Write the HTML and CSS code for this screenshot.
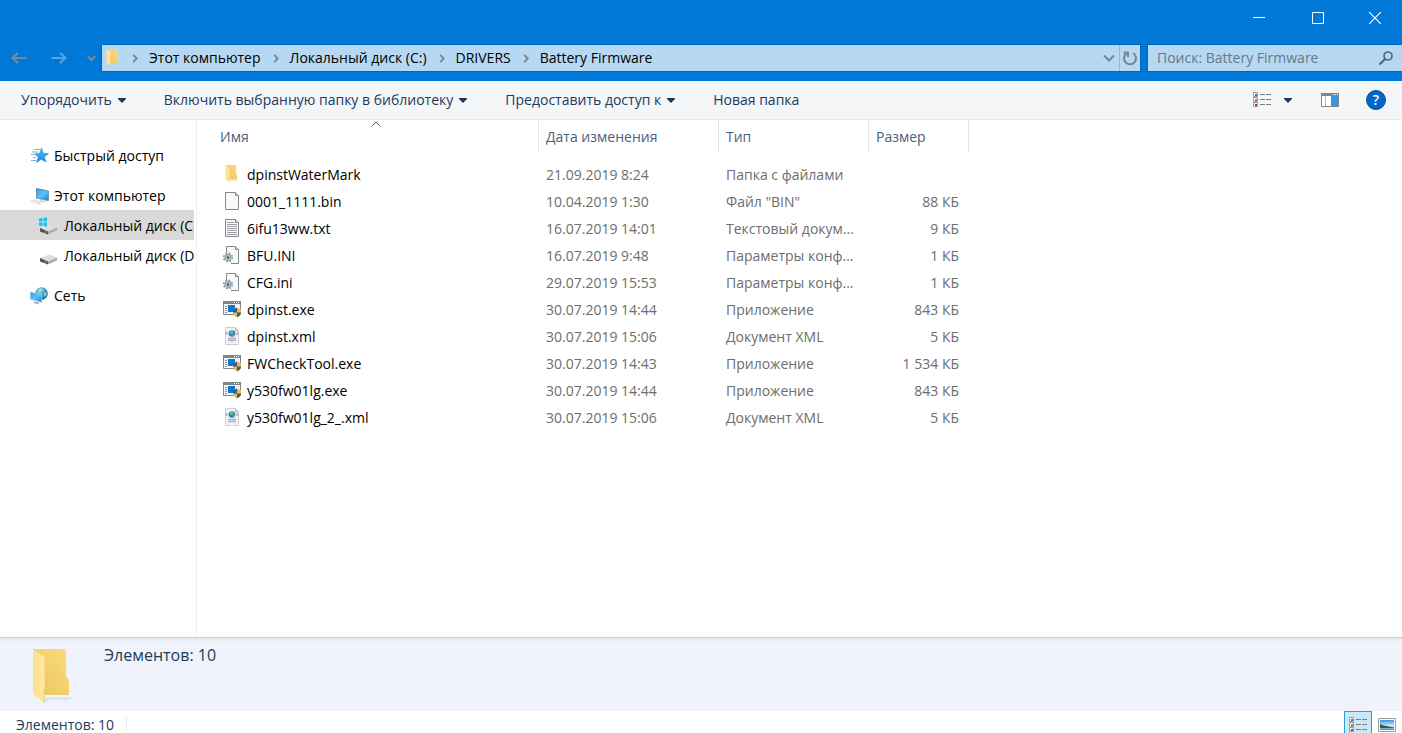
FILE: index.html
```html
<!DOCTYPE html>
<html lang="ru">
<head>
<meta charset="utf-8">
<meta name="viewport" content="width=device-width, initial-scale=1">
<title>Battery Firmware</title>
<link rel="stylesheet" href="styles.css">
</head>
<body>
<svg class="sprite" aria-hidden="true">
  <defs>
    <linearGradient id="g-front" x1="0" y1="0" x2="1" y2="0"><stop offset="0" stop-color="#ffe08a"/><stop offset="1" stop-color="#ffe9a6"/></linearGradient>
    <linearGradient id="g-back" x1="0" y1="1" x2="1" y2="0"><stop offset="0" stop-color="#eac45f"/><stop offset="1" stop-color="#fbdc7d"/></linearGradient>
    <linearGradient id="g-screen" x1="0" y1="0" x2="1" y2="1"><stop offset="0" stop-color="#2f9fe8"/><stop offset=".5" stop-color="#5cc0fa"/><stop offset="1" stop-color="#1c86d8"/></linearGradient>
    <linearGradient id="g-star" x1="0" y1="0" x2="0" y2="1"><stop offset="0" stop-color="#49c3f7"/><stop offset="1" stop-color="#1c84e0"/></linearGradient>
    <linearGradient id="g-pic" x1="0" y1="0" x2="0" y2="1"><stop offset="0" stop-color="#3f8fd8"/><stop offset=".6" stop-color="#d8eefa"/><stop offset="1" stop-color="#4c86b8"/></linearGradient>
    <radialGradient id="g-globe" cx=".35" cy=".3" r=".8"><stop offset="0" stop-color="#8fd0e6"/><stop offset=".6" stop-color="#3c94bd"/><stop offset="1" stop-color="#1d5e8c"/></radialGradient>
  </defs>
  <symbol id="folder" viewBox="0 0 40 56">
    <path d="M10 48h30l-4 3H10zM11 54l5-3h-5z" fill="#c9ccd6" opacity=".4"/>
    <path d="M0 0h33v27l3 4v15H8z" fill="url(#g-back)"/>
    <path d="M0 0l12 9v30l-1 1v14L0 45z" fill="url(#g-front)"/>
    <path d="M12 9v30l-1 1v14" fill="none" stroke="#f2cf70"/>
  </symbol>
  <symbol id="page" viewBox="0 0 18 20">
    <path d="M2.500 1.500h10l3 3v14h-13z" fill="#f8f9f9" stroke="#85878a"/>
    <path d="M12.500 1.500v3h3" fill="#dcdcdc" stroke="#85878a"/>
  </symbol>
  <symbol id="text" viewBox="0 0 18 20">
    <use href="#page"/>
    <path d="M4 4.500h7M4 6.500h10M4 8.500h10M4 10.500h10M4 12.500h10M4 14.500h10M4 16.500h10" stroke="#9c9ea1"/>
  </symbol>
  <symbol id="config" viewBox="0 0 18 20">
    <path d="M3.500 8V1.500h9l3 3v14H8" fill="#f8f9f9" stroke="#85878a"/>
    <path d="M12.500 1.500v3h3" fill="#dcdcdc" stroke="#85878a"/>
    <circle cx="5" cy="12.500" r="4.300" fill="none" stroke="#8a969f" stroke-width="1.600" stroke-dasharray="1.700 1.700"/>
    <circle cx="5" cy="12.500" r="2.800" fill="#e8ecef" stroke="#9aa6af" stroke-width="1.800"/>
    <circle cx="5" cy="12.500" r="1.200" fill="#33424d"/>
  </symbol>
  <symbol id="app" viewBox="0 0 18 20">
    <path d="M.5 2.500h17v13H.5z" fill="#f4f4f4" stroke="#80858a"/>
    <path d="M0 2h18v3H0z" fill="#80858a"/>
    <path d="M11 3.500h1M13 3.500h1M15 3.500h1" stroke="#fff"/>
    <path d="M2 7.500h2M2 9.500h2M2 11.500h2M2 13.500h2" stroke="#8d9297"/>
    <path d="M5 6h7v7H5z" fill="#0a78d4"/>
    <path d="M14 8.500c1 .9 2.300 1.300 4 1.300V13c0 2.500-1.500 4.300-4 5.300-2.500-1-4-2.800-4-5.300V9.800c1.700 0 3-.4 4-1.300z" fill="#f3b63f"/>
    <path d="M14 8.500v5h-4V9.800c1.700 0 3-.4 4-1.300zM14 13.500h4c-.2 2.200-1.700 3.900-4 4.800z" fill="#2d5f96"/>
  </symbol>
  <symbol id="xml" viewBox="0 0 18 20">
    <path d="M2.500 1.500h10l3 3v14h-13z" fill="#f3f2f6" stroke="#d2d0d6"/>
    <path d="M12.500 1.500v3h3" fill="#dedce4" stroke="#b5b2bc"/>
    <circle cx="9" cy="7.500" r="3.300" fill="#2b7bc6"/>
    <path d="M7 5.500l2-1 1.500 1.500L9 8.500 7.500 8zM10 8.500l1.500-.5-.5 2-1.500.5z" fill="#5fd06a"/>
    <path d="M4.500 6L3 7.500 4.500 9M13.500 6L15 7.500 13.500 9" fill="none" stroke="#77808a"/>
    <path d="M5 12.500h8M5 14.500h8" stroke="#b3afbd" stroke-width="1.500"/>
  </symbol>
  <symbol id="star" viewBox="0 0 20 20">
    <path d="M4 3.500h6M2 6h6M1 8.500h3M3 11.500h3M1 14.500h5" stroke="#6db3e8"/>
    <path d="M11.500 2l1.800 5.300 5.200.4-4.200 3.300 1.700 5-4.700-2.700-5 3.200 2-5.500L4.500 8l5-.5z" fill="url(#g-star)" stroke="#2b85d4" stroke-width=".6"/>
  </symbol>
  <symbol id="computer" viewBox="0 0 20 20">
    <path d="M6 2l12 2.500v11L6 12.500z" fill="#c3cbd1"/>
    <path d="M6.500 2.500L18.500 5v9.500l-12-2.700z" fill="url(#g-screen)" stroke="#4d7895" stroke-width=".6"/>
    <path d="M10 14l5 1v1.500l-5-1.500zM0 15.500l4-2 9 2.500-4 2.500z" fill="#ccd1d5"/>
    <path d="M2 15.500l7 2M3.500 14.500l8 2" stroke="#f3f4f5"/>
  </symbol>
  <symbol id="disk" viewBox="0 0 20 20">
    <path d="M2 12l9-3.500 8 3-9 4z" fill="#dcddde"/>
    <path d="M2 12l8 3.500v3l-8-3z" fill="#4e5152"/>
    <path d="M10 15.500l9-4v2.700l-9 4.300z" fill="#a9acae"/>
    <path d="M7 16l1 .4" stroke="#54e053" stroke-width="1.500"/>
  </symbol>
  <symbol id="windisk" viewBox="0 0 20 20">
    <use href="#disk"/>
    <path d="M1 2.500l3.500-.5v3.500H1zM5.500 2l3.500-.5v4H5.500zM1 6.500h3.500V10L1 9.500zM5.500 6.500H9v4l-3.500-.5z" fill="#12c0f5"/>
  </symbol>
  <symbol id="network" viewBox="0 0 20 20">
    <circle cx="11.500" cy="7.500" r="6.300" fill="url(#g-globe)"/>
    <path d="M8 4c2-2 4-2 5-1l-1 2-3 1zM14 7l2-1 1 2-2 3-1-1z" fill="#bfe7ee" opacity=".6"/>
    <path d="M0 5.500l12 3v8.500L0 13.500z" fill="#b9d7e8"/>
    <path d="M.6 6.300l10.900 2.800v7L.6 13z" fill="url(#g-screen)"/>
    <path d="M4 15.500l5 1.200v1.800l-5-1.500z" fill="#9aa5ad"/>
  </symbol>
  <symbol id="details" viewBox="0 0 20 18">
    <path d="M1.500 1.500h4v4h-4zM1.500 6.500h4v4h-4zM1.500 11.500h4v4h-4z" fill="#fff" stroke="#9a9a9a"/>
    <path d="M8 3.500h5M14 3.500h5M8 8.500h5M14 8.500h5M8 13.500h5M14 13.500h5" stroke="#7e7e7e"/>
    <path d="M3 3h2v2H3z" fill="#3b78b8"/><path d="M3 8h2v2H3z" fill="#9a8a35"/><path d="M3 13h2v2H3z" fill="#c13622"/>
  </symbol>
  <symbol id="chev" viewBox="0 0 6 10"><path d="M1 1l4 4-4 4" fill="none" stroke="#7f8184" stroke-width="2"/></symbol>
  <symbol id="drop" viewBox="0 0 8 5"><path d="M0 0h8v1L4 5 0 1z" fill="#1e395b"/></symbol>
</svg>

<header class="chrome">
  <div class="caption">
    <button type="button" aria-label="Свернуть"><svg width="12" height="12"><path d="M0 5.500h12" stroke="#fff"/></svg></button>
    <button type="button" aria-label="Развернуть"><svg width="12" height="12"><path d="M.5.5h11v11H.5z" fill="none" stroke="#fff"/></svg></button>
    <button type="button" aria-label="Закрыть"><svg width="12" height="12"><path d="M0 0l12 12M12 0L0 12" stroke="#fff" stroke-width="1.200"/></svg></button>
  </div>
  <div class="locator">
    <div class="history">
      <button type="button" aria-label="Назад"><svg width="16" height="12"><path d="M15.500 6H1.500M7 .7L1.500 6 7 11.300" fill="none" stroke="#7b8a99" stroke-width="2"/></svg></button>
      <button type="button" aria-label="Вперёд"><svg width="16" height="12"><path d="M.5 6h14M9 .7L14.500 6 9 11.300" fill="none" stroke="#5ba2e0" stroke-width="2"/></svg></button>
      <button type="button" class="recent" aria-label="Последние расположения"><svg width="9" height="7"><path d="M.7 1l3.800 4 3.800-4" fill="none" stroke="#7b8a99" stroke-width="2"/></svg></button>
    </div>
    <nav class="address" aria-label="Адрес">
      <svg class="crumb-folder"><use href="#folder"/></svg>
      <svg class="chev"><use href="#chev"/></svg><a href="#">Этот компьютер</a>
      <svg class="chev"><use href="#chev"/></svg><a href="#">Локальный диск (C:)</a>
      <svg class="chev"><use href="#chev"/></svg><a href="#">DRIVERS</a>
      <svg class="chev"><use href="#chev"/></svg><a href="#">Battery Firmware</a>
      <button type="button" class="expand" aria-label="Предыдущие расположения"><svg width="12" height="8"><path d="M1 1.500l5 5 5-5" fill="none" stroke="#7b858e" stroke-width="2"/></svg></button>
      <button type="button" class="refresh" aria-label="Обновить"><svg width="16" height="16"><path d="M11 3a6 6 0 1 1-6.500.4M1.500 2.500H6V7" fill="none" stroke="#7b858e" stroke-width="2"/></svg></button>
    </nav>
    <form class="search">
      <input type="search" aria-label="Поиск" placeholder="Поиск: Battery Firmware">
      <button type="button" aria-label="Найти"><svg width="14" height="14"><circle cx="9" cy="5" r="4" fill="none" stroke="#54687b" stroke-width="1.700"/><path d="M6 8l-5.500 5.500" stroke="#54687b" stroke-width="2.200"/></svg></button>
    </form>
  </div>
</header>

<div class="toolbar">
  <button type="button">Упорядочить <svg class="drop"><use href="#drop"/></svg></button>
  <button type="button">Включить выбранную папку в библиотеку <svg class="drop"><use href="#drop"/></svg></button>
  <button type="button">Предоставить доступ к <svg class="drop"><use href="#drop"/></svg></button>
  <button type="button">Новая папка</button>
  <div class="tools">
    <button type="button" aria-label="Вид"><svg width="20" height="18"><use href="#details"/></svg></button>
    <button type="button" aria-label="Другие виды"><svg class="drop"><use href="#drop"/></svg></button>
    <button type="button" class="preview" aria-label="Область просмотра"><svg width="18" height="14"><path d="M.5.5h17v13H.5z" fill="#fff" stroke="#838689"/><path d="M0 0h18v3H0z" fill="#838689"/><path d="M12 1.500h1M14 1.500h1M16 1.500h1" stroke="#fff"/><path d="M4.500 3v10" stroke="#b5b7b9"/><path d="M10 3h7v10h-7z" fill="#3796e4"/></svg></button>
    <button type="button" class="help" aria-label="Справка">?</button>
  </div>
</div>

<div class="main">
  <nav class="tree" aria-label="Область навигации">
    <ul>
      <li class="root"><a href="#"><svg class="nav-icon"><use href="#star"/></svg>Быстрый доступ</a></li>
      <li class="root"><a href="#"><svg class="nav-icon"><use href="#computer"/></svg>Этот компьютер</a>
        <ul>
          <li><a href="#" class="current" aria-current="page"><svg class="nav-icon"><use href="#windisk"/></svg>Локальный диск (C:)</a></li>
          <li><a href="#"><svg class="nav-icon"><use href="#disk"/></svg>Локальный диск (D:)</a></li>
        </ul>
      </li>
      <li class="root"><a href="#"><svg class="nav-icon"><use href="#network"/></svg>Сеть</a></li>
    </ul>
  </nav>
  <main class="files">
    <table>
      <colgroup><col class="c-name"><col class="c-date"><col class="c-type"><col class="c-size"></colgroup>
      <thead>
        <tr>
          <th scope="col" aria-sort="ascending"><button type="button">Имя</button><svg class="sort" width="10" height="6"><path d="M.5 5.500L5 1l4.500 4.500" fill="none" stroke="#5c5c5c"/></svg></th>
          <th scope="col"><button type="button">Дата изменения</button></th>
          <th scope="col"><button type="button">Тип</button></th>
          <th scope="col"><button type="button">Размер</button></th>
        </tr>
      </thead>
      <tbody>
        <tr><td><span class="file"><svg class="dir-icon"><use href="#folder"/></svg>dpinstWaterMark</span></td><td>21.09.2019 8:24</td><td>Папка с файлами</td><td></td></tr>
        <tr><td><span class="file"><svg class="file-icon"><use href="#page"/></svg>0001_1111.bin</span></td><td>10.04.2019 1:30</td><td>Файл "BIN"</td><td>88 КБ</td></tr>
        <tr><td><span class="file"><svg class="file-icon"><use href="#text"/></svg>6ifu13ww.txt</span></td><td>16.07.2019 14:01</td><td>Текстовый докум...</td><td>9 КБ</td></tr>
        <tr><td><span class="file"><svg class="file-icon"><use href="#config"/></svg>BFU.INI</span></td><td>16.07.2019 9:48</td><td>Параметры конф...</td><td>1 КБ</td></tr>
        <tr><td><span class="file"><svg class="file-icon"><use href="#config"/></svg>CFG.ini</span></td><td>29.07.2019 15:53</td><td>Параметры конф...</td><td>1 КБ</td></tr>
        <tr><td><span class="file"><svg class="file-icon"><use href="#app"/></svg>dpinst.exe</span></td><td>30.07.2019 14:44</td><td>Приложение</td><td>843 КБ</td></tr>
        <tr><td><span class="file"><svg class="file-icon"><use href="#xml"/></svg>dpinst.xml</span></td><td>30.07.2019 15:06</td><td>Документ XML</td><td>5 КБ</td></tr>
        <tr><td><span class="file"><svg class="file-icon"><use href="#app"/></svg>FWCheckTool.exe</span></td><td>30.07.2019 14:43</td><td>Приложение</td><td>1 534 КБ</td></tr>
        <tr><td><span class="file"><svg class="file-icon"><use href="#app"/></svg>y530fw01lg.exe</span></td><td>30.07.2019 14:44</td><td>Приложение</td><td>843 КБ</td></tr>
        <tr><td><span class="file"><svg class="file-icon"><use href="#xml"/></svg>y530fw01lg_2_.xml</span></td><td>30.07.2019 15:06</td><td>Документ XML</td><td>5 КБ</td></tr>
      </tbody>
    </table>
  </main>
</div>

<section class="summary">
  <svg width="40" height="56"><use href="#folder"/></svg>
  <p>Элементов: 10</p>
</section>

<footer class="status">
  <span class="count">Элементов: 10</span>
  <div class="modes">
    <button type="button" class="on" aria-label="Таблица" aria-pressed="true"><svg width="20" height="18"><use href="#details"/></svg></button>
    <button type="button" aria-label="Крупные значки" aria-pressed="false"><svg width="18" height="14"><path d="M.5.5h17v13H.5z" fill="#fff" stroke="#9a9a9a"/><path d="M2 2h14v10H2z" fill="url(#g-pic)"/><path d="M2 6l4 1.500 10 2V10H2z" fill="#2c5d50"/></svg></button>
  </div>
</footer>
</body>
</html>
```

FILE: styles.css
```css
* { box-sizing: border-box; }

body {
  margin: 0;
  height: 100vh;
  display: flex;
  flex-direction: column;
  overflow: hidden;
  background: #fff;
  color: #000;
  font: 14px/20px "Open Sans", "Noto Sans", sans-serif;
}

button {
  display: flex;
  align-items: center;
  padding: 0;
  border: 0;
  background: none;
  color: inherit;
  font: inherit;
}

a { color: inherit; text-decoration: none; }
ul { margin: 0; padding: 0; list-style: none; }
svg { display: block; flex: none; }
.sprite { position: absolute; width: 0; height: 0; }

.chrome { background: #0078d7; padding-bottom: 9px; }

.caption { display: flex; justify-content: flex-end; height: 36px; margin-bottom: 8px; }
.caption button { width: 59px; justify-content: center; }
.caption button:last-child { width: 55px; }

.locator { display: flex; height: 28px; }
.history { display: flex; align-items: center; width: 101px; padding-left: 11px; gap: 24px; }
.recent { margin-left: -4px; }

.address {
  display: flex;
  align-items: center;
  flex: 1;
  min-width: 0;
  border: 1px solid #0067b8;
  background: #b6d8f3;
  padding-left: 4px;
  white-space: nowrap;
}
.crumb-folder { width: 14px; height: 18px; margin-right: 12px; }
.chev { width: 6px; height: 9px; margin-right: 11px; }
.address a { margin-right: 12px; }
.expand { margin-left: auto; padding-right: 4px; }
.refresh { align-self: stretch; width: 21px; justify-content: center; border-left: 1px solid #8dbbe0; }

.search {
  display: flex;
  width: 255px;
  margin-left: 6px;
  padding: 0 9px;
  border: 1px solid #0067b8;
  border-right: 0;
  background: #b6d8f3;
}
.search input { flex: 1; min-width: 0; padding: 0; border: 0; outline: 0; background: none; font: inherit; }
.search input::placeholder { color: #66798a; opacity: 1; }

.toolbar {
  display: flex;
  align-items: center;
  height: 39px;
  padding: 0 16px 0 21px;
  gap: 38px;
  border-bottom: 1px solid #e6e7e9;
  background: #f5f6f7;
  color: #1e395b;
  white-space: nowrap;
}
.toolbar button { gap: 6px; line-height: 22px; }
.drop { width: 8px; height: 5px; }
.tools { display: flex; align-items: center; gap: 12px; margin-left: auto; }
.tools .preview { margin: 0 15px 0 17px; }
.toolbar .help {
  width: 20px;
  height: 20px;
  justify-content: center;
  border: 1px solid #00539c;
  border-radius: 50%;
  background: #0066c8;
  color: #fff;
  font-weight: 600;
}

.main { display: flex; flex: 1; min-height: 0; }

.tree { width: 197px; padding: 20px 2px 0 0; border-right: 1px solid #f0f0f0; }
.root { margin-bottom: 10px; }
.tree a {
  display: flex;
  align-items: center;
  gap: 4px;
  height: 30px;
  padding: 2px 0 0 30px;
  overflow: hidden;
  white-space: nowrap;
}
.tree ul ul a { padding-left: 38px; gap: 6px; }
.tree .current { background: #d9d9d9; }
.nav-icon { width: 20px; height: 20px; }

.files { flex: 1; min-width: 0; overflow: hidden; }
table { width: 772px; table-layout: fixed; border-collapse: separate; border-spacing: 0; }
.c-name { width: 342px; }
.c-date { width: 180px; }
.c-type { width: 150px; }
.c-size { width: 100px; }
th {
  position: relative;
  height: 32px;
  padding: 2px 7px 0;
  border-right: 1px solid #e5e5e5;
  color: #4c607a;
  font-weight: 400;
}
th:first-child { padding-left: 23px; }
.sort { position: absolute; top: 1px; left: 174px; }
tbody::before { content: ""; display: block; height: 9px; }
td { height: 27px; padding: 0 7px; color: #6d6d6d; white-space: nowrap; }
td:first-child { padding-left: 26px; color: #000; }
td:last-child { padding-right: 10px; text-align: right; }
.file { display: flex; align-items: center; gap: 6px; }
.file-icon { width: 18px; height: 20px; margin-bottom: 2px; }
.dir-icon { width: 18px; height: 18px; margin-bottom: 2px; }

.summary {
  display: flex;
  align-items: flex-start;
  gap: 31px;
  height: 74px;
  padding: 7px 33px;
  border-top: 1px solid #c6d1e2;
  background: linear-gradient(#dfe6f2, #f0f3fb 4px);
  color: #1e395b;
  font-size: 16px;
}
.summary svg { margin-top: 4px; }
.summary p { margin: 0; }

.status { display: flex; justify-content: space-between; height: 22px; color: #1e395b; overflow: hidden; }
.count { height: 18px; line-height: 18px; margin: 4px 0 0 16px; padding: 2px 12px 0 0; border-right: 1px solid #ededed; line-height: 16px; }
.modes { display: flex; }
.modes button { width: 30px; height: 28px; justify-content: center; }
.modes .on { width: 28px; border: 1px solid #26a0da; background: #cbe8f6; }
```
